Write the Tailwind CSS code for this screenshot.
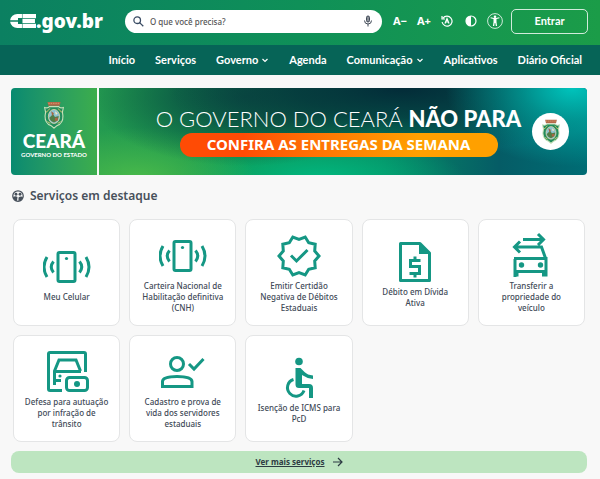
<!DOCTYPE html>
<html lang="pt-BR">
<head>
<meta charset="utf-8">
<meta name="viewport" content="width=device-width, initial-scale=1">
<title>CE.gov.br</title>
<script src="https://cdn.jsdelivr.net/npm/@tailwindcss/browser@4"></script>
</head>
<body class="bg-[#f8f8f8] font-['Noto_Sans',sans-serif] text-[#414a57]">
<svg class="hidden" aria-hidden="true">
  <symbol id="phone" viewBox="0 0 48 48"><g fill="none" stroke="currentColor" stroke-width="3"><rect x="15" y="9.500" width="17" height="29" rx="1.500"/><path d="M10.500 18.500q-4.500 5.500 0 11M4 14q-6 10 0 20M36.500 18.500q4.500 5.500 0 11M43 14q6 10 0 20"/></g><circle cx="23.500" cy="15.500" r="1.600" fill="currentColor"/></symbol>
  <symbol id="chevron" viewBox="0 0 8 8"><path d="M1.500 3 4 5.500 6.500 3" fill="none" stroke="currentColor" stroke-width="1.200"/></symbol>
  <symbol id="crest" viewBox="1 0 22 31">
    <path d="M5 1h14l-1 4H6z" fill="#b5694a"/><path d="M6 2.500h12" stroke="#e0aa78" stroke-width=".8" stroke-dasharray="1.500 1"/>
    <path d="M2 7q4 1 5-1h10q1 2 5 1l-1 5q2 9-3 13-3 1-6 4-3-3-6-4-5-4-3-13z" fill="#228c5c" stroke="#c6dfb8" stroke-width="1.200"/>
    <path d="M3.500 12q3-2 4-4M20.500 12q-3-2-4-4M5 22l3 2M19 22l-3 2" stroke="#e0d270" stroke-width="1"/>
    <ellipse cx="12" cy="16.500" rx="6" ry="7.500" fill="#8dc2cf" stroke="#ead9a8" stroke-width=".8"/>
    <path d="M7 18l4-4 2 3 4-1q0 5-5 7-4-1-5-5z" fill="#527d46"/><path d="M9 11l3 2-2 3zM13 18h3v3h-3z" fill="#a76542"/><path d="M13 11l3 2-2 2z" fill="#f0e8c6"/>
  </symbol>
</svg>

<header class="text-white">
  <div class="flex h-[45px] items-center bg-linear-to-r from-[#0b8061] via-[#0f9058] to-[#1b9c48] pb-[3px] pl-[10px] pr-3">
    <a href="#" aria-label="CE.gov.br" class="flex w-[92px] shrink-0 items-center">
      <svg class="h-[14px] w-[26px] shrink-0" viewBox="0 0 25 14" fill="#fff" preserveAspectRatio="none"><path d="M11.500 0H7A7 7 0 0 0 .1 6.200h7.600V3.900h3.800zM.1 7.800A7 7 0 0 0 7 14h4.500v-3.900H7.700V7.800zM12 0H25v4.300H12zM12 5.100H24v3.800H12zM12 9.700H25V14H12z"/></svg>
      <span class="text-[19px] leading-6 font-black">.gov.br</span>
    </a>
    <form class="ml-[23px] flex h-[23px] flex-1 items-center rounded-full bg-white px-2 text-[#394b63]">
      <label for="busca" aria-label="Buscar" class="shrink-0"><svg class="size-[11px]" viewBox="0 0 11 11" fill="none" stroke="currentColor" stroke-width="1.300"><circle cx="4.200" cy="4.200" r="3.300"/><path d="m6.600 6.600 3.700 3.700"/></svg></label>
      <input id="busca" type="search" placeholder="O que você precisa?" class="ml-[6px] h-5 min-w-0 flex-1 bg-transparent text-[8px] font-medium outline-none placeholder:text-[#555]">
      <button type="button" aria-label="Busca por voz" class="shrink-0"><svg class="size-3" viewBox="0 0 12 12" fill="none" stroke="#414a57" stroke-width="1"><rect x="4.500" y="1" width="3" height="6" rx="1.500" fill="#8a8f97"/><path d="M2.500 5.500a3.500 3.500 0 0 0 7 0M6 9v2.500"/></svg></button>
    </form>
    <div class="ml-[11px] flex shrink-0 items-center">
      <button type="button" class="w-6 text-left text-[11px] leading-4 font-bold">A−</button>
      <button type="button" class="w-6 text-left text-[11px] leading-4 font-bold">A+</button>
      <button type="button" aria-label="Restaurar texto" class="w-6"><svg class="size-3" viewBox="0 0 12 12" fill="none" stroke="#fff" stroke-width="1.200"><path d="M2 3.200A5 5 0 1 1 1.100 7M1 1v3h3M4 8.500 6 3.500l2 5M4.700 7h2.600"/></svg></button>
      <button type="button" aria-label="Contraste" class="w-[22px]"><svg class="size-3" viewBox="0 0 12 12"><circle cx="6" cy="6" r="5" fill="none" stroke="#fff" stroke-width="1.200"/><path d="M6 1a5 5 0 0 0 0 10z" fill="#fff"/></svg></button>
      <button type="button" aria-label="Acessibilidade"><svg class="size-4" viewBox="0 0 16 16" fill="#fff"><circle cx="8" cy="8" r="7.400" fill="none" stroke="#fff" stroke-width=".8"/><circle cx="8" cy="3.700" r="1.300"/><path d="M3.500 5.200 6.500 6v3l-.6 4h1.300l.5-3h.6l.5 3h1.300l-.6-4V6l3-.8-.2-1-3.300.8H7l-3.300-.8z"/></svg></button>
      <button type="button" class="ml-2 h-[25px] w-[77px] rounded-[5px] border border-white/80 font-['Lato',sans-serif] text-[11px] font-bold">Entrar</button>
    </div>
  </div>
  <nav class="flex h-[30px] items-center justify-end gap-5 bg-[#066457] pr-[18px] font-['Lato',sans-serif] text-[11px] leading-4 font-bold">
    <a href="#">Início</a>
    <a href="#">Serviços</a>
    <a href="#" class="flex items-center gap-[3px]">Governo <svg class="size-2"><use href="#chevron"/></svg></a>
    <a href="#">Agenda</a>
    <a href="#" class="flex items-center gap-[3px]">Comunicação <svg class="size-2"><use href="#chevron"/></svg></a>
    <a href="#">Aplicativos</a>
    <a href="#">Diário Oficial</a>
  </nav>
</header>

<main class="pt-[13px] pr-[14px] pl-3">
  <a href="#" class="-mx-px flex h-[87px] gap-[2px] overflow-hidden rounded-[4px] text-white">
    <div class="flex w-[86px] shrink-0 flex-col items-center bg-linear-to-r from-[#078a70] to-[#3cad4c] pt-[13px]">
      <svg class="h-[29px] w-[22px]"><use href="#crest"/></svg>
      <strong class="font-['Lato',sans-serif] text-[19px] leading-[21px] font-black">CEARÁ</strong>
      <span class="font-['Lato',sans-serif] text-[6px] leading-[7px] font-bold">GOVERNO DO ESTADO</span>
    </div>
    <div class="flex flex-1 items-center bg-[radial-gradient(26%_90%_at_97%_0%,#00c4bc_0%,#00b0a8aa_40%,transparent_100%),radial-gradient(48%_75%_at_62%_0%,#032b38_0%,#04353ccc_45%,transparent_100%),radial-gradient(32%_80%_at_30%_10%,#0c5244_0%,#0c5744cc_45%,transparent_100%),radial-gradient(24%_60%_at_8%_105%,#4aba4a_0%,transparent_100%),radial-gradient(30%_50%_at_45%_105%,#00b880_0%,transparent_100%),linear-gradient(90deg,#249b50_0%,#12964f_30%,#078a62_58%,#055c66_82%,#006c74_100%)] pr-[18px] pl-[46px]">
      <div class="flex flex-1 flex-col items-center">
        <p class="font-['Lato',sans-serif] text-[22px] leading-6 whitespace-nowrap"><span class="font-light">O GOVERNO DO CEARÁ</span> <strong class="font-black">NÃO PARA</strong></p>
        <p class="mt-[2px] flex h-6 w-[318px] items-center justify-center rounded-full bg-linear-to-r from-[#ff4b05] from-20% to-[#ffa000] to-75% text-[15px] font-bold">CONFIRA AS ENTREGAS DA SEMANA</p>
      </div>
      <span class="flex size-[37px] shrink-0 items-center justify-center rounded-full bg-white"><svg class="h-[26px] w-5"><use href="#crest"/></svg></span>
    </div>
  </a>

  <h1 class="mt-[13px] flex h-4 items-center gap-[6px] text-[12px] leading-4 font-semibold text-[#47505b]">
    <svg class="size-3" viewBox="0 0 24 24"><circle cx="12" cy="12" r="10.500" fill="none" stroke="currentColor" stroke-width="2.500"/><g fill="currentColor"><circle cx="8" cy="8.500" r="2.800"/><circle cx="16" cy="8.500" r="2.800"/><path d="M2 14q5-3 9 0l-1 8Q3 20 2 14zM13 22v-7q4-3 9-1-1 7-9 8z"/></g></svg>
    Serviços em destaque
  </h1>

  <div class="mt-[15px] grid grid-cols-5 gap-[9px] px-px text-center text-[8px] leading-[11px] font-medium [&>a]:flex [&>a]:h-[107px] [&>a]:flex-col [&>a]:items-center [&>a]:justify-center [&>a]:rounded-[8px] [&>a]:border [&>a]:border-[#e4e5e6] [&>a]:bg-white [&>a]:px-[10px] [&_svg]:size-12 [&_svg]:shrink-0 [&_svg]:text-[#159784]">
    <a href="#"><svg><use href="#phone"/></svg>Meu Celular</a>
    <a href="#"><svg><use href="#phone"/></svg>Carteira Nacional de Habilitação definitiva (CNH)</a>
    <a href="#"><svg viewBox="0 0 48 48" fill="none" stroke="currentColor" stroke-width="3"><path d="M44 24 39.700 29.100 40.200 35.800 33.700 37.300 30.200 43 24 40.500 17.800 43 14.300 37.300 7.800 35.800 8.300 29.100 4 24 8.300 18.900 7.800 12.200 14.300 10.700 17.800 5 24 7.500 30.200 5 33.700 10.700 40.200 12.200 39.700 18.900z"/><path d="m16 23.500 5.500 5.500L32.500 18"/></svg>Emitir Certidão Negativa de Débitos Estaduais</a>
    <a href="#"><svg viewBox="0 0 48 48" fill="none" stroke="currentColor" stroke-width="3"><path d="M9.500 5.500H29L38.500 15v27.500h-29z" stroke-linejoin="round"/><path d="M28 5v11h11z" fill="currentColor" stroke="none"/><path d="M29.500 22.500h-10v6h9v7h-10M24 18.500v4M24 35.500v4"/></svg>Débito em Dívida<br>Ativa</a>
    <a href="#"><svg viewBox="0 0 48 48" fill="none" stroke="currentColor" stroke-width="3"><path d="M16 7.500h20M31 2l5.500 5.500L31 13M13 9.500 7.500 15 13 20.500M8 15h26.500L39 27.500v17M8 27v18M7 26.500h33.500M7 39.500h33.500M36.500 40v4.500M10 40v4.500"/><g fill="currentColor" stroke="none"><circle cx="14.500" cy="33" r="2.700"/><circle cx="33.500" cy="33" r="2.700"/></g></svg>Transferir a propriedade do veículo</a>
    <a href="#"><svg viewBox="0 0 48 48" fill="none" stroke="currentColor" stroke-width="3"><path d="M19 42.500H7a1.500 1.500 0 0 1-1.500-1.500V6A1.500 1.500 0 0 1 7 4.500h34A1.500 1.500 0 0 1 42.500 6v18"/><path d="M11.500 37V23l4.500-11h17l4.500 11M11 23.500h27M12 32.500h6"/><circle cx="17" cy="28" r="1.600" fill="currentColor" stroke="none"/><rect x="23.500" y="29.500" width="21" height="13" rx="3"/><circle cx="34" cy="36" r="3" fill="currentColor" stroke="none"/></svg>Defesa para autuação por infração de trânsito</a>
    <a href="#"><svg viewBox="0 0 48 48" fill="none" stroke="currentColor" stroke-width="3"><circle cx="18" cy="16" r="6.500"/><path d="M3.500 38.500v-5q0-5 14.500-5t15 5v5zM30 16l5 5 9.500-10"/></svg>Cadastro e prova de vida dos servidores estaduais</a>
    <a href="#"><svg viewBox="0 0 48 48" fill="none" stroke="currentColor" stroke-width="3"><circle cx="24" cy="7.500" r="3.800" fill="currentColor" stroke="none"/><path d="M20.500 14h5l4 4q3 3 8.500 3.500v3.500q-6-.5-11-4v9H34q4 0 4 4v10h-4V34H24q-3.500 0-3.500-3.500z" fill="currentColor" stroke="none"/><path d="M18.500 25.500a8.500 8.500 0 1 0 10.500 11"/></svg>Isenção de ICMS para<br>PcD</a>
  </div>

  <a href="#" class="-mx-px mt-[9px] mb-[6px] flex h-[22px] items-center justify-center gap-2 rounded-[8px] bg-[#bde5c0] text-[8px] leading-3 font-bold text-[#2d3b43]">
    <span class="underline">Ver mais serviços</span>
    <svg class="size-[10px]" viewBox="0 0 10 10" fill="none" stroke="currentColor" stroke-width="1.200"><path d="M0 5h9M5 1l4 4-4 4"/></svg>
  </a>
</main>
</body>
</html>
